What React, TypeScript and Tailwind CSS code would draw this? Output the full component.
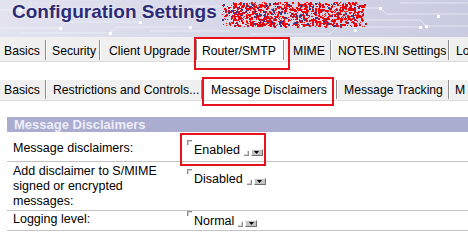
import React from 'react';

type Tab = { label: string; w?: number; pl: number; selected?: boolean };

const topTabs: Tab[] = [
  { label: 'Basics', w: 47, pl: 4 },
  { label: 'Security', w: 54, pl: 5 },
  { label: 'Client Upgrade', w: 97, pl: 8 },
  { label: 'Router/SMTP', w: 87, pl: 4, selected: true },
  { label: 'MIME', w: 47, pl: 8 },
  { label: 'NOTES.INI Settings', w: 118, pl: 6 },
  { label: 'Lo', pl: 6 },
];

const subTabs: Tab[] = [
  { label: 'Basics', w: 47, pl: 4 },
  { label: 'Restrictions and Controls...', w: 156, pl: 6 },
  { label: 'Message Disclaimers', w: 135, pl: 8, selected: true },
  { label: 'Message Tracking', w: 112, pl: 6 },
  { label: 'M', pl: 5 },
];

// deterministic noise for the red redaction scribble
function makeDots() {
  let s = 12345;
  const r = () => {
    s = (s * 1103515245 + 12345) % 2147483648;
    return s / 2147483648;
  };
  const dots: { x: number; y: number; w: number; c: string }[] = [];
  for (let i = 0; i < 1300; i++) {
    const x = 222 + r() * 143;
    const edge = x < 232 || x > 355 ? 0.5 : 1;
    if (r() > edge) continue;
    const y = 2 + r() * 24;
    const k = r();
    dots.push({ x, y, w: k > 0.6 ? 2 : 1, c: k > 0.93 ? '#3a3a8a' : k > 0.8 ? '#c0102a' : '#ff0000' });
  }
  return dots;
}
const dots = makeDots();

function CircuitPattern() {
  const traces = [
    'M0 28 H60 L66 22 H140',
    'M20 33 H110 L116 27 H190',
    'M150 31 H230 L236 25 H300',
    'M250 34 H330 L337 27 H420',
    'M330 8 H380 L386 14 H468',
    'M360 20 H420 L426 26 H468',
    'M400 3 H468',
    'M190 6 H240',
    'M0 10 H20',
  ];
  const pads = [
    [140, 22], [190, 27], [300, 25], [420, 27], [60, 28], [110, 33], [380, 8], [426, 26], [240, 6], [355, 30], [438, 16], [20, 10],
  ];
  return (
    <svg className="absolute inset-0" width="468" height="37" viewBox="0 0 468 37">
      {traces.map((d, i) => (
        <path key={i} d={d} stroke="#eef0fa" strokeOpacity="0.75" strokeWidth="1" fill="none" />
      ))}
      {pads.map(([x, y], i) => (
        <rect key={i} x={x - 1} y={y - 1} width="3" height="3" fill="#ffffff" />
      ))}
    </svg>
  );
}

function TabStrip({ tabs, height, pt, sepTop, sepH }: { tabs: Tab[]; height: number; pt: number; sepTop: number; sepH: number }) {
  return (
    <div className="flex bg-[#f0f0f0] border-b border-[#dcdcdc]" style={{ height }}>
      {tabs.map((t) => (
        <div
          key={t.label}
          className={`relative flex shrink-0 overflow-hidden whitespace-nowrap text-[12.2px] leading-[15px] text-black ${t.selected ? 'bg-white' : ''} ${t.w ? '' : 'flex-1'}`}
          style={{ width: t.w, paddingLeft: t.pl, paddingTop: pt }}
        >
          {t.label}
          {t.w && (
            <span
              className="absolute right-0 w-[2px] border-l border-[#8c8c8c] bg-white"
              style={{ top: sepTop, height: sepH }}
            />
          )}
        </div>
      ))}
    </div>
  );
}

function Corner({ end, className = '' }: { end?: boolean; className?: string }) {
  return end ? (
    <span className={`block h-[5px] w-[5px] shrink-0 border-b border-r border-[#8e8e8e] shadow-[inset_-1px_-1px_0_#d0d0d0] ${className}`} />
  ) : (
    <span className={`block h-[5px] w-[5px] shrink-0 border-l border-t border-[#8e8e8e] shadow-[inset_1px_1px_0_#d0d0d0] ${className}`} />
  );
}

function DropButton({ className = '' }: { className?: string }) {
  return (
    <span className={`flex h-[7px] w-[12px] shrink-0 items-center justify-center border border-b-[#6f6f6f] border-l-[#f4f4f4] border-r-[#6f6f6f] border-t-[#f4f4f4] bg-[#c4c4c4] ${className}`}>
      <svg width="5" height="3" viewBox="0 0 5 3">
        <path d="M0 0 H5 L2.5 3 Z" fill="#000" />
      </svg>
    </span>
  );
}

function Value({ text }: { text: string }) {
  return (
    <div className="flex items-start">
      <Corner className="mt-[-2px]" />
      <span className="ml-[2px] mt-px whitespace-nowrap text-[12.5px] leading-[15px] text-black">{text}</span>
      <Corner end className="ml-[4px] mt-[9px]" />
      <DropButton className="ml-[2px] mt-[7px]" />
    </div>
  );
}

export default function App() {
  return (
    <div className="relative h-[250px] w-[468px] overflow-hidden bg-white font-['Liberation_Sans',Arial,sans-serif]">
      {/* header */}
      <div className="relative h-[37px] bg-gradient-to-r from-[#e2e3ef] via-[#d6d7e8] to-[#c9cbe0]">
        <CircuitPattern />
        <div className="relative pl-[12px] pt-[1px] text-[19px] font-bold leading-[22px] text-[#2c2b76] [text-shadow:0_0_2px_#ffffff]">
          Configuration Settings
        </div>
        <svg className="absolute left-0 top-0" width="468" height="37" viewBox="0 0 468 37">
          {dots.map((d, i) => (
            <rect key={i} x={Math.round(d.x)} y={Math.round(d.y)} width={d.w} height={d.w} fill={d.c} />
          ))}
        </svg>
      </div>

      <TabStrip tabs={topTabs} height={25} pt={7} sepTop={3} sepH={20} />
      <div className="mt-[18px]">
        <TabStrip tabs={subTabs} height={21} pt={3} sepTop={0} sepH={19} />
      </div>

      {/* section */}
      <div className="ml-[7px] mt-[16px]">
        <div className="h-[15px] bg-[#aaacd0] pl-[7px] text-[13px] font-bold leading-[15px] text-[#eeeef8]">
          Message Disclaimers
        </div>

        <div className="flex h-[30px] border-b border-[#c4c4c4]">
          <div className="w-[180px] pl-[6px] pt-[9px] text-[12.5px] leading-[15px] text-black">Message disclaimers:</div>
          <div className="pt-[10px]"><Value text="Enabled" /></div>
        </div>

        <div className="flex h-[49px] border-b border-[#c4c4c4]">
          <div className="w-[180px] pl-[6px] pt-[2px] text-[12.5px] leading-[15px] text-black">
            Add disclaimer to S/MIME
            <br />
            signed or encrypted
            <br />
            messages:
          </div>
          <div className="pt-[9px]"><Value text="Disabled" /></div>
        </div>

        <div className="flex h-[20px] border-b border-[#c4c4c4]">
          <div className="w-[180px] pl-[6px] pt-[1px] text-[12.5px] leading-[15px] text-black">Logging level:</div>
          <div className="pt-[2px]"><Value text="Normal" /></div>
        </div>
      </div>

      {/* red annotation boxes */}
      <div className="absolute left-[194px] top-[37px] h-[33px] w-[96px] border-2 border-[#e8121c]" />
      <div className="absolute left-[202px] top-[77px] h-[29px] w-[132px] border-2 border-[#e8121c]" />
      <div className="absolute left-[180px] top-[133px] h-[33px] w-[86px] border-2 border-[#e8121c]" />
    </div>
  );
}
